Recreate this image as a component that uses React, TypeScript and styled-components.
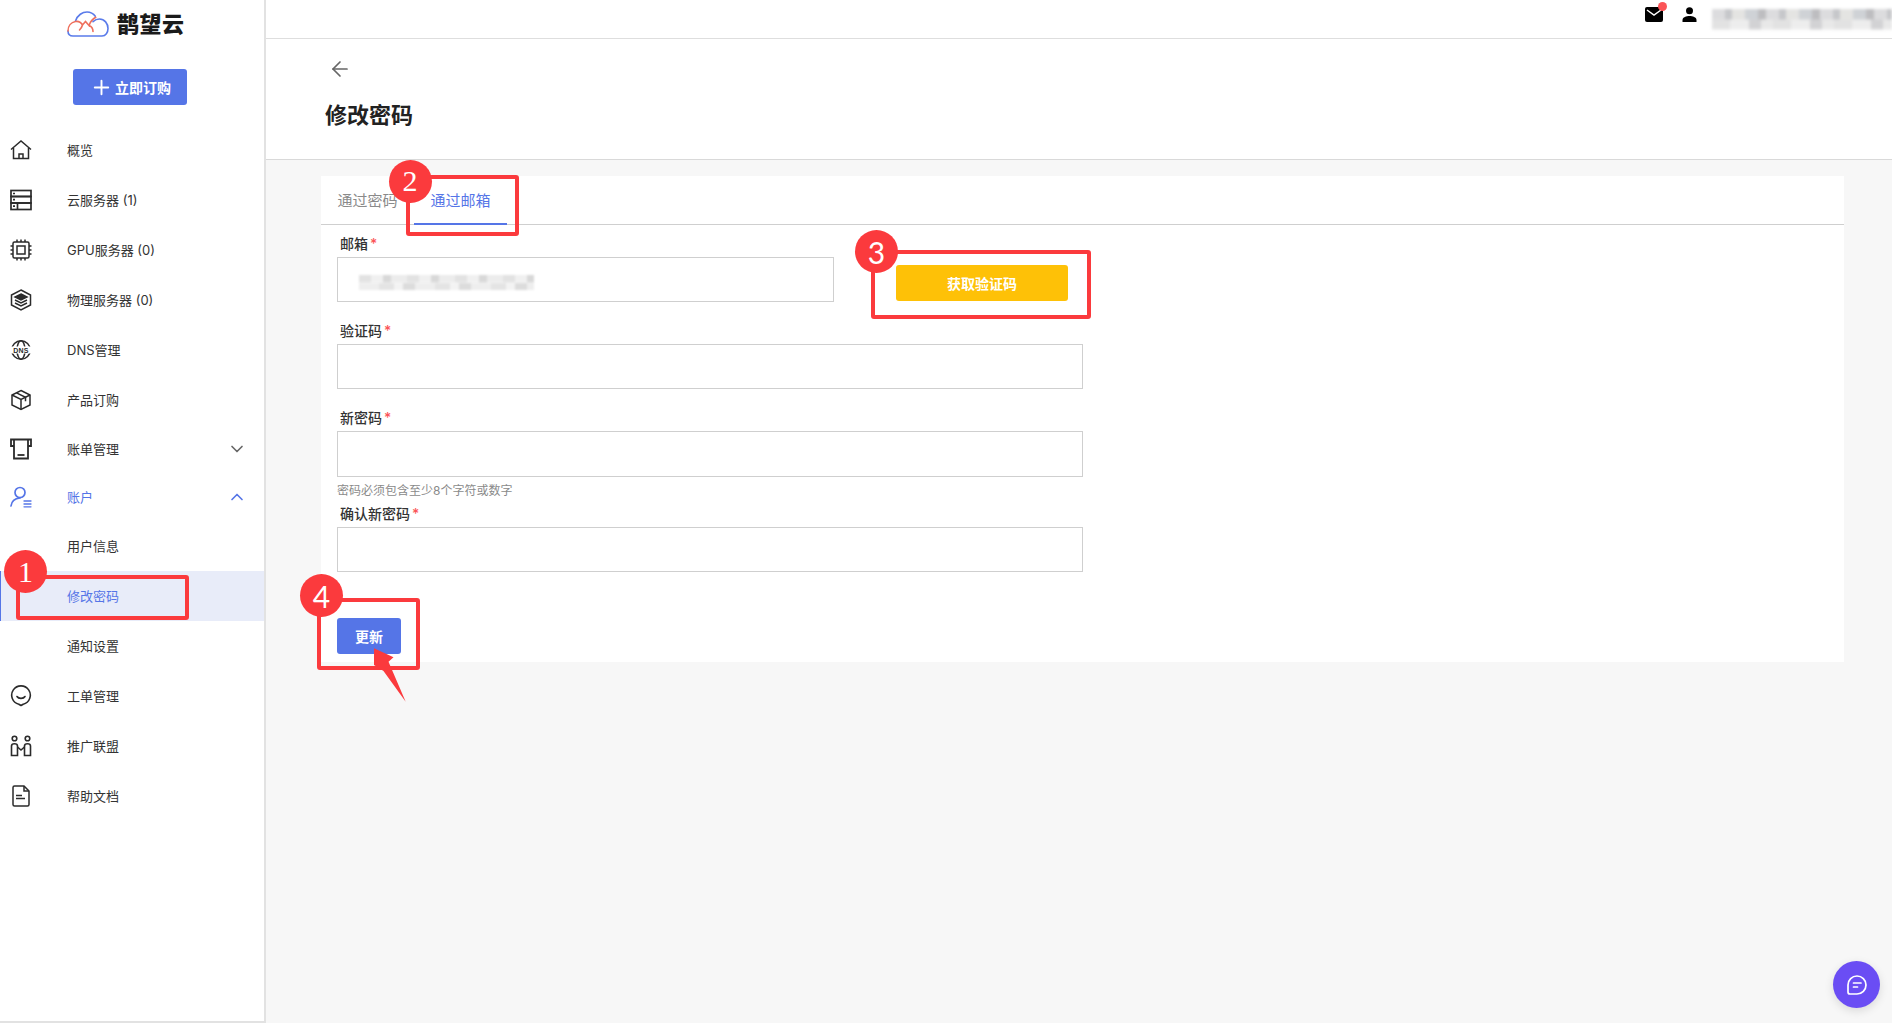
import React from 'react';
import styled, { createGlobalStyle } from 'styled-components';
import { ArrowLeft, ChevronDown, ChevronUp, Plus } from 'lucide-react';

const Global = createGlobalStyle`
  html, body { margin: 0; padding: 0; height: 100%; background: #f7f7f7; }
  body { font-family: Inter, "Noto Sans CJK SC", sans-serif; color: #333; overflow: hidden; }
  * { box-sizing: border-box; }
`;

const BLUE = '#5575e7';
const RED = '#fb3a3d';

const HomeIcon = () => (
  <svg width="22" height="22" viewBox="0 0 22 22" fill="none" stroke="#2b2b2b" strokeWidth="1.5">
    <path d="M1 10.500 11 2l10 8.500" />
    <path d="M3.500 9v10.500h15V9" />
    <path d="M9 19.500V15h4v4.500" />
  </svg>
);
const ServerIcon = () => (
  <svg width="22" height="22" viewBox="0 0 22 22" fill="none" stroke="#2b2b2b" strokeWidth="1.7">
    <rect x="1" y="1.500" width="20" height="6" />
    <rect x="1" y="7.500" width="20" height="6.500" />
    <rect x="1" y="14" width="20" height="6.500" />
    <path d="M3 4.500h2M3 10.700h2M3 17.200h2M7.500 14v6.500" />
  </svg>
);
const ChipIcon = () => (
  <svg width="22" height="22" viewBox="0 0 22 22" fill="none" stroke="#2b2b2b" strokeWidth="1.500">
    <rect x="3" y="3" width="16" height="16" rx="1.500" />
    <rect x="7" y="7" width="8" height="8" />
    <path d="M7 0.500v2.500M11 0.500v2.500M15 0.500v2.500M7 19v2.500M11 19v2.500M15 19v2.500M0.500 7h2.500M0.500 11h2.500M0.500 15h2.500M19 7h2.500M19 11h2.500M19 15h2.500" />
  </svg>
);
const StackIcon = () => (
  <svg width="22" height="22" viewBox="0 0 22 22" fill="none" stroke="#2b2b2b" strokeWidth="1.500">
    <path d="M11 1 20.500 6v10L11 21 1.500 16V6z" />
    <path d="M11 5l6 3-6 3-6-3z" fill="#2b2b2b" />
    <path d="M5 11l6 3 6-3M5 14l6 3 6-3" />
  </svg>
);
const GlobeBadge = styled.text`
  font: 700 7px "Liberation Sans", sans-serif;
  letter-spacing: 0.2px;
  fill: #2b2b2b;
  stroke: none;
`;
const DnsIcon = () => (
  <svg width="22" height="22" viewBox="0 0 22 22" fill="none" stroke="#2b2b2b" strokeWidth="1.500">
    <circle cx="11" cy="11" r="9.300" />
    <ellipse cx="11" cy="11" rx="4" ry="9.300" />
    <rect x="0" y="7.500" width="22" height="7" fill="#fff" stroke="none" />
    <GlobeBadge x="11" y="13.500" textAnchor="middle">DNS</GlobeBadge>
  </svg>
);
const BoxIcon = () => (
  <svg width="22" height="22" viewBox="0 0 22 22" fill="none" stroke="#2b2b2b" strokeWidth="1.500">
    <path d="M11 1.500 20 6v10l-9 4.500L2 16V6z" />
    <path d="M2 6l9 4.500L20 6M11 10.500v10" />
    <path d="M6.500 3.800l9 4.500v4" />
  </svg>
);
const BillIcon = () => (
  <svg width="22" height="22" viewBox="0 0 22 22" fill="none" stroke="#2b2b2b" strokeWidth="1.800">
    <path d="M4 8H1V1.500h20V8h-3" />
    <path d="M4 1.500v19h14v-19" />
    <path d="M7.500 17h7" />
  </svg>
);
const AccountIcon = () => (
  <svg width="22" height="22" viewBox="0 0 22 22" fill="none" stroke={BLUE} strokeWidth="1.700" strokeLinecap="round">
    <circle cx="10" cy="6.500" r="5" />
    <path d="M1 20c.5-4.500 3.500-7.500 9-8" />
    <path d="M14 15h7M14 18h7M14 20.800h7" strokeWidth="1.300" />
  </svg>
);
const SmileIcon = () => (
  <svg width="22" height="22" viewBox="0 0 22 22" fill="none" stroke="#2b2b2b" strokeWidth="1.600" strokeLinecap="round">
    <path d="M11 20.500l-2.200-1.300A9.300 9.300 0 1 1 13.200 19.200z" strokeLinejoin="round" />
    <path d="M7 11.500c1.500 2.500 6.500 2.500 8 0" />
  </svg>
);
const PartnerIcon = () => (
  <svg width="22" height="22" viewBox="0 0 22 22" fill="none" stroke="#2b2b2b" strokeWidth="1.600">
    <circle cx="4.500" cy="3.500" r="2.300" />
    <circle cx="17.500" cy="3.500" r="2.300" />
    <path d="M1.500 20.500V11c0-3 6-3 6 0v9.500zM14.500 20.500V11c0-3 6-3 6 0v9.500z" />
    <path d="M7.500 12l3.500 3 3.500-3" />
  </svg>
);
const DocIcon = () => (
  <svg width="22" height="22" viewBox="0 0 22 22" fill="none" stroke="#2b2b2b" strokeWidth="1.500">
    <path d="M3 2.500A1.500 1.500 0 0 1 4.500 1H14l5 5v13.500a1.500 1.500 0 0 1-1.500 1.500h-13A1.500 1.500 0 0 1 3 19.500z" />
    <path d="M14 1v5h5" />
    <path d="M6 10.500h6M6 13.500h9" />
  </svg>
);

const CloudLogo = () => (
  <svg width="42" height="26" viewBox="0 0 42 26" fill="none" strokeWidth="1.600" strokeLinecap="round">
    <path
      d="M6 25h29c3.700 0 6-3.400 6-7.500 0-5-3.500-9.500-8.500-9.500-2.500 0-4.700 1-6.500 2.700M8.500 10C10.500 4 15.500 1 20 1c3.400 0 6.300 1.500 8.300 4.300M1 20c0 3 2 5 5 5"
      stroke="#5a7bea"
    />
    <path
      d="M1 20c0-5 3-8.800 7.500-9.500 3-.5 5.500 1 7 3.500l3-3.500 3.500 4c1.500-4.500 3.500-6.500 6.800-8.200M15.500 14c-.5 2-1.500 3.500-3 5M22 14.500c2.500 1 4 3.500 4 6"
      stroke="#ee6f5c"
    />
  </svg>
);

const Shell = styled.div`
  position: relative;
  display: flex;
  width: 1892px;
  height: 1023px;
  overflow: hidden;
`;

const Sidebar = styled.aside`
  flex: 0 0 266px;
  height: 1023px;
  background: #fff;
  border-right: 2px solid #e2e2e2;
  border-bottom: 2px solid #e2e2e2;
`;

const LogoRow = styled.div`
  height: 69px;
  padding: 11px 0 0 67px;
  display: flex;
  align-items: flex-start;
  gap: 8px;
`;

const LogoText = styled.span`
  font-size: 22px;
  line-height: 27px;
  font-weight: 900;
  color: #1a1a1a;
  letter-spacing: 0.5px;
`;

const OrderButton = styled.button`
  display: flex;
  align-items: center;
  width: 114px;
  height: 36px;
  margin: 0 0 20px 73px;
  padding: 0 0 0 17px;
  gap: 2px;
  border: 0;
  border-radius: 3px;
  background: ${BLUE};
  color: #fff;
  font: 600 14px Inter, "Noto Sans CJK SC", sans-serif;
`;

const NavRow = styled.div<{ $short?: boolean; $active?: boolean; $blue?: boolean }>`
  display: flex;
  align-items: center;
  height: ${p => (p.$short ? 48 : 50)}px;
  padding: 0 17px 0 10px;
  font-size: 13px;
  color: ${p => (p.$active || p.$blue ? BLUE : '#333')};
  background: ${p => (p.$active ? '#e8ecf9' : 'transparent')};
  box-shadow: ${p => (p.$active ? `inset 1px 0 0 ${BLUE}` : 'none')};
`;

const NavIcon = styled.span`
  flex: 0 0 22px;
  height: 22px;
  display: flex;
  margin-right: 35px;
`;

const NavLabel = styled.span`
  flex: 1;
  padding-bottom: 2px;
`;

const Main = styled.main`
  flex: 1;
  min-width: 0;
  display: flex;
  flex-direction: column;
`;

const TopBar = styled.header`
  display: flex;
  align-items: center;
  justify-content: flex-end;
  height: 39px;
  background: #fff;
  border-bottom: 1px solid #dedede;
  padding-bottom: 9px;
`;

const MailWrap = styled.span`
  position: relative;
  display: flex;
  margin-right: 19px;
`;

const MailDot = styled.span`
  position: absolute;
  top: -5px;
  right: -4px;
  width: 9px;
  height: 9px;
  border-radius: 50%;
  background: #fb5457;
`;

const UserGlyph = styled.span`
  display: flex;
  margin-right: 15px;
`;

const BlurName = styled.div`
  width: 180px;
  height: 21px;
  margin-top: 9px;
  filter: blur(1.500px);
  background:
    repeating-linear-gradient(90deg, #dcdcde 0 13px, #c6c7ca 13px 20px, #e4e4e2 20px 33px, #cfd2d6 33px 46px, #bdbdc0 46px 54px) top / 100% 50% no-repeat,
    repeating-linear-gradient(90deg, #e2e2e2 0 18px, #ededed 18px 37px, #d2d2d4 37px 49px, #e8e8e8 49px 61px) bottom / 100% 50% no-repeat;
`;

const PageHead = styled.section`
  height: 121px;
  background: #fff;
  border-bottom: 1px solid #d9d9d9;
  padding: 18px 0 0 59px;
`;

const BackLink = styled.div`
  display: flex;
  height: 24px;
  margin: 0 0 19px 3px;
  color: #666;
`;

const PageTitle = styled.h1`
  margin: 0;
  font-size: 22px;
  line-height: 30px;
  font-weight: 700;
  color: #222;
`;

const Content = styled.div`
  padding: 16px 48px 0 55px;
`;

const Card = styled.div`
  background: #fff;
  height: 486px;
`;

const Tabs = styled.div`
  display: flex;
  height: 49px;
  border-bottom: 1px solid #cfcfcf;
`;

const Tab = styled.div<{ $active?: boolean }>`
  width: 93px;
  height: 49px;
  padding: 0 16.500px;
  font-size: 15px;
  line-height: 50px;
  white-space: nowrap;
  color: ${p => (p.$active ? BLUE : '#8a8a8a')};
  border-bottom: ${p => (p.$active ? `2px solid ${BLUE}` : 'none')};
`;

const Form = styled.form`
  padding: 8px 0 0 16px;
`;

const Label = styled.label`
  display: block;
  height: 20px;
  margin: 0 0 4px 3px;
  font-size: 14px;
  line-height: 21px;
  font-weight: 500;
  color: #333;
`;

const Star = styled.span`
  color: #fb5457;
  margin-left: 2px;
  font-size: 14px;
`;

const Input = styled.div<{ $w?: number; $h?: number }>`
  width: ${p => p.$w ?? 746}px;
  height: ${p => p.$h ?? 45}px;
  border: 1px solid #cfcfcf;
  padding: 17px 0 0 21px;
`;

const Field = styled.div<{ $gap?: number }>`
  margin-bottom: ${p => p.$gap ?? 18}px;
`;

const EmailRow = styled.div`
  display: flex;
  align-items: flex-start;
`;

const BlurEmail = styled.div`
  width: 175px;
  height: 15px;
  filter: blur(1.200px);
  background:
    repeating-linear-gradient(90deg, #e2e2e2 0 12px, #f0f0f0 12px 24px, #d8d8d8 24px 32px, #ececec 32px 48px) top / 100% 50% no-repeat,
    repeating-linear-gradient(90deg, #eeeeee 0 20px, #e4e4e4 20px 35px, #f3f3f3 35px 44px, #dcdcdc 44px 56px) bottom / 100% 50% no-repeat;
`;

const CodeButton = styled.button`
  width: 172px;
  height: 36px;
  margin: 8px 0 0 62px;
  border: 0;
  border-radius: 3px;
  background: #fec107;
  color: #fff;
  font: 600 14px Inter, "Noto Sans CJK SC", sans-serif;
`;

const Hint = styled.div`
  height: 26px;
  font-size: 12px;
  line-height: 28px;
  color: #8a8a8a;
`;

const SubmitButton = styled.button`
  display: block;
  width: 64px;
  height: 36px;
  margin: 46px 0 0;
  border: 0;
  border-radius: 3px;
  background: ${BLUE};
  color: #fff;
  font: 600 14px Inter, "Noto Sans CJK SC", sans-serif;
`;

const Marker = styled.div<{ $x: number; $y: number; $serif?: boolean }>`
  position: absolute;
  left: ${p => p.$x - 21.500}px;
  top: ${p => p.$y - 21.500}px;
  width: 43px;
  height: 43px;
  border-radius: 50%;
  background: ${RED};
  color: #fff;
  display: flex;
  align-items: center;
  justify-content: center;
  font-size: 30px;
  font-family: ${p => (p.$serif ? '"Liberation Serif", serif' : 'Lato, sans-serif')};
  z-index: 3;
`;

const Frame = styled.div<{ $x: number; $y: number; $w: number; $h: number }>`
  position: absolute;
  left: ${p => p.$x}px;
  top: ${p => p.$y}px;
  width: ${p => p.$w}px;
  height: ${p => p.$h}px;
  border: 4px solid ${RED};
  border-radius: 3px;
  z-index: 2;
`;

const Pointer = styled.svg`
  position: absolute;
  left: 370px;
  top: 644px;
  z-index: 3;
`;

const ChatBubble = styled.div`
  position: absolute;
  left: 1833px;
  top: 961px;
  width: 47px;
  height: 47px;
  border-radius: 50%;
  background: #6a4df4;
  display: flex;
  align-items: center;
  justify-content: center;
  box-shadow: 0 3px 10px rgba(0, 0, 0, 0.12);
`;

type NavItem = {
  label: string;
  icon?: React.ReactNode;
  chevron?: 'up' | 'down';
  short?: boolean;
  active?: boolean;
  blue?: boolean;
};

const items: NavItem[] = [
  { label: '概览', icon: <HomeIcon /> },
  { label: '云服务器 (1)', icon: <ServerIcon /> },
  { label: 'GPU服务器 (0)', icon: <ChipIcon /> },
  { label: '物理服务器 (0)', icon: <StackIcon /> },
  { label: 'DNS管理', icon: <DnsIcon /> },
  { label: '产品订购', icon: <BoxIcon /> },
  { label: '账单管理', icon: <BillIcon />, chevron: 'down', short: true },
  { label: '账户', icon: <AccountIcon />, chevron: 'up', short: true, blue: true },
  { label: '用户信息' },
  { label: '修改密码', active: true },
  { label: '通知设置' },
  { label: '工单管理', icon: <SmileIcon /> },
  { label: '推广联盟', icon: <PartnerIcon /> },
  { label: '帮助文档', icon: <DocIcon /> },
];

export default function App() {
  return (
    <Shell>
      <Global />
      <Sidebar>
        <LogoRow>
          <CloudLogo />
          <LogoText>鹊望云</LogoText>
        </LogoRow>
        <OrderButton>
          <Plus size={23} strokeWidth={2} />
          立即订购
        </OrderButton>
        <nav>
          {items.map(item => (
            <NavRow key={item.label} $short={item.short} $active={item.active} $blue={item.blue}>
              <NavIcon>{item.icon}</NavIcon>
              <NavLabel>{item.label}</NavLabel>
              {item.chevron === 'down' && <ChevronDown size={20} color="#666" />}
              {item.chevron === 'up' && <ChevronUp size={20} color={BLUE} />}
            </NavRow>
          ))}
        </nav>
      </Sidebar>

      <Main>
        <TopBar>
          <MailWrap>
            <svg width="18" height="15" viewBox="0 0 18 15">
              <rect width="18" height="15" rx="2" fill="#000" />
              <path d="M2 3l7 5 7-5" fill="none" stroke="#fff" strokeWidth="1.500" />
            </svg>
            <MailDot />
          </MailWrap>
          <UserGlyph>
            <svg width="15" height="15" viewBox="0 0 15 15" fill="#000">
              <circle cx="7.500" cy="3.800" r="3.500" />
              <path d="M0.500 15v-2c0-3 4-4 7-4s7 1 7 4v2z" />
            </svg>
          </UserGlyph>
          <BlurName />
        </TopBar>

        <PageHead>
          <BackLink>
            <ArrowLeft size={24} strokeWidth={1.700} />
          </BackLink>
          <PageTitle>修改密码</PageTitle>
        </PageHead>

        <Content>
          <Card>
            <Tabs>
              <Tab>通过密码</Tab>
              <Tab $active>通过邮箱</Tab>
            </Tabs>
            <Form>
              <Field>
                <Label>邮箱<Star>*</Star></Label>
                <EmailRow>
                  <Input $w={497}>
                    <BlurEmail />
                  </Input>
                  <CodeButton type="button">获取验证码</CodeButton>
                </EmailRow>
              </Field>
              <Field>
                <Label>验证码<Star>*</Star></Label>
                <Input />
              </Field>
              <Field $gap={0}>
                <Label>新密码<Star>*</Star></Label>
                <Input $h={46} />
              </Field>
              <Hint>密码必须包含至少8个字符或数字</Hint>
              <Field $gap={0}>
                <Label>确认新密码<Star>*</Star></Label>
                <Input />
              </Field>
              <SubmitButton type="button">更新</SubmitButton>
            </Form>
          </Card>
        </Content>
      </Main>

      <Frame $x={16} $y={575} $w={173} $h={45} />
      <Marker $x={25.500} $y={571.500} $serif>1</Marker>
      <Frame $x={406} $y={175} $w={113} $h={61} />
      <Marker $x={410} $y={181} $serif>2</Marker>
      <Frame $x={871} $y={250} $w={220} $h={69} />
      <Marker $x={876.500} $y={251.500}>3</Marker>
      <Frame $x={317} $y={598} $w={103} $h={72} />
      <Marker $x={321.500} $y={595.500}>4</Marker>
      <Pointer width="38" height="60" viewBox="0 0 38 60">
        <path d="M4 4.300 23.500 13.300 18.500 17.700 35.700 57.700 13.500 27 4 21z" fill={RED} />
      </Pointer>

      <ChatBubble>
        <svg width="22" height="22" viewBox="0 0 22 22" fill="none" stroke="#fff" strokeWidth="1.700" strokeLinecap="round">
          <path d="M11 2a9 9 0 0 1 0 18H4a2 2 0 0 1-2-2v-7a9 9 0 0 1 9-9z" />
          <path d="M7.500 9h7.500M7.500 13h4" />
        </svg>
      </ChatBubble>
    </Shell>
  );
}
